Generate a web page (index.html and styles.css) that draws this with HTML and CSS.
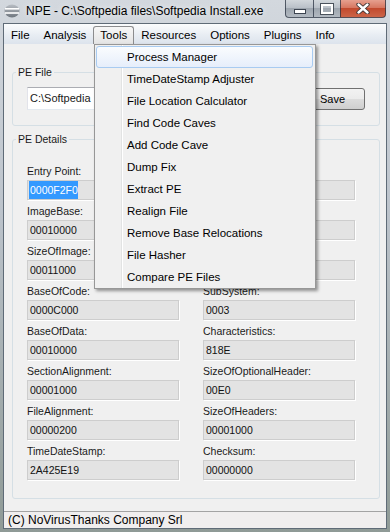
FILE: index.html
```html
<!DOCTYPE html>
<html lang="en">
<head>
  <meta charset="UTF-8" />
  <meta name="viewport" content="width=device-width, initial-scale=1.0"/>
  <title>NPE</title>
  <link rel="stylesheet" href="styles.css">
</head>
<body>

  <div class="window">

    <!-- Title bar -->
    <header class="titlebar">
      <svg class="app-icon" width="16" height="14" viewBox="0 0 16 14">
        <defs>
          <linearGradient id="disc" x1="0" y1="0" x2="0" y2="1">
            <stop offset="0" stop-color="#b9bec4"/>
            <stop offset="1" stop-color="#6f767e"/>
          </linearGradient>
        </defs>
        <ellipse cx="8" cy="7" rx="7.5" ry="6.5" fill="url(#disc)"/>
        <rect x="1" y="4" width="14" height="1.6" fill="#fff"/>
        <rect x="1" y="8.2" width="14" height="1.6" fill="#fff"/>
      </svg>
      <span class="title">NPE - C:\Softpedia files\Softpedia Install.exe</span>
      <div class="caption">
        <span class="cap-btn cap-min"><i class="glyph-min"></i></span>
        <span class="cap-btn cap-max"><i class="glyph-max"></i></span>
        <span class="cap-btn cap-close">
          <svg width="14" height="11" viewBox="0 0 14 11">
            <path d="M2.5 1.5 L11.5 9.5 M11.5 1.5 L2.5 9.5" stroke="#3a3030" stroke-width="4.2" stroke-linecap="round"/>
            <path d="M2.5 1.5 L11.5 9.5 M11.5 1.5 L2.5 9.5" stroke="#fff" stroke-width="2.4" stroke-linecap="round"/>
          </svg>
        </span>
      </div>
    </header>

    <div class="client">

      <!-- Menu bar -->
      <nav class="menubar">
        <span class="menu-item">File</span>
        <span class="menu-item">Analysis</span>
        <span class="menu-item open">Tools</span>
        <span class="menu-item">Resources</span>
        <span class="menu-item">Options</span>
        <span class="menu-item">Plugins</span>
        <span class="menu-item">Info</span>
      </nav>

      <main class="content">

        <section class="group">
          <div class="group-title">PE File</div>
          <div class="file-row">
            <div class="path">C:\Softpedia</div>
            <button class="btn">Save</button>
          </div>
        </section>

        <section class="group details">
          <div class="group-title">PE Details</div>
          <div class="fields">
            <div class="field"><div class="label">Entry Point:</div><div class="value"><span class="selected">0000F2F0</span></div></div>
            <div class="field"><div class="label"></div><div class="value"></div></div>

            <div class="field"><div class="label">ImageBase:</div><div class="value">00010000</div></div>
            <div class="field"><div class="label"></div><div class="value"></div></div>

            <div class="field"><div class="label">SizeOfImage:</div><div class="value">00011000</div></div>
            <div class="field"><div class="label"></div><div class="value"></div></div>

            <div class="field"><div class="label">BaseOfCode:</div><div class="value">0000C000</div></div>
            <div class="field"><div class="label">SubSystem:</div><div class="value">0003</div></div>

            <div class="field"><div class="label">BaseOfData:</div><div class="value">00010000</div></div>
            <div class="field"><div class="label">Characteristics:</div><div class="value">818E</div></div>

            <div class="field"><div class="label">SectionAlignment:</div><div class="value">00001000</div></div>
            <div class="field"><div class="label">SizeOfOptionalHeader:</div><div class="value">00E0</div></div>

            <div class="field"><div class="label">FileAlignment:</div><div class="value">00000200</div></div>
            <div class="field"><div class="label">SizeOfHeaders:</div><div class="value">00001000</div></div>

            <div class="field"><div class="label">TimeDateStamp:</div><div class="value">2A425E19</div></div>
            <div class="field"><div class="label">Checksum:</div><div class="value">00000000</div></div>
          </div>
        </section>

      </main>

      <footer class="statusbar">(C) NoVirusThanks Company Srl</footer>
    </div>

    <!-- Open Tools menu -->
    <ul class="dropdown">
      <li class="active">Process Manager</li>
      <li>TimeDateStamp Adjuster</li>
      <li>File Location Calculator</li>
      <li>Find Code Caves</li>
      <li>Add Code Cave</li>
      <li>Dump Fix</li>
      <li>Extract PE</li>
      <li>Realign File</li>
      <li>Remove Base Relocations</li>
      <li>File Hasher</li>
      <li>Compare PE Files</li>
    </ul>

  </div>

</body>
</html>
```

FILE: styles.css
```css
body {
  margin: 0;
  font-family: 'Liberation Sans', Arial, sans-serif;
  background: #b8c0c8;
}

.window {
  position: relative;
  width: 390px;
  height: 532px;
  box-sizing: border-box;
  padding: 0 3px 3px;
  display: flex;
  flex-direction: column;
  background: linear-gradient(#d3d8de, #bcc3cb 40%, #8f9a96);
}

/* title bar */
.titlebar {
  height: 23px;
  flex-shrink: 0;
  display: flex;
  align-items: flex-start;
}

.app-icon {
  margin: 4px 0 0 1px;
}

.title {
  margin: 4px 0 0 6px;
  font-size: 12px;
  line-height: 14px;
  color: #000;
  white-space: nowrap;
  text-shadow: 0 0 6px rgba(255,255,255,0.9);
}

.caption {
  margin-left: auto;
  margin-right: 1px;
  display: flex;
  height: 18px;
}

.cap-btn {
  display: flex;
  align-items: center;
  justify-content: center;
  height: 18px;
  box-sizing: border-box;
  border: 1px solid rgba(40,50,65,0.75);
  border-top: none;
  background: linear-gradient(#d2d7dc, #b7bec6 50%, #9ea6af 50%, #b2b9c1);
}

.cap-min {
  width: 28px;
  border-right: none;
  border-radius: 0 0 0 4px;
}

.cap-max {
  width: 27px;
  border-right: none;
}

.cap-close {
  width: 46px;
  border-radius: 0 0 4px 0;
  background: linear-gradient(#e6a08f, #d5735c 50%, #c24a2e 50%, #cc6447);
}

.glyph-min {
  display: block;
  width: 10px;
  height: 3px;
  margin-top: 6px;
  background: #fff;
  border: 1px solid #3c4450;
}

.glyph-max {
  display: block;
  width: 8px;
  height: 6px;
  border: 2px solid #fff;
  outline: 1px solid #4a525c;
}

/* client area */
.client {
  flex: 1;
  min-height: 0;
  display: flex;
  flex-direction: column;
  border: 1px solid #5f6b77;
  background: #f0f0f0;
}

.menubar {
  height: 20px;
  flex-shrink: 0;
  display: flex;
  font-size: 11.5px;
  color: #000;
  background: linear-gradient(#fbfcfd, #e8edf3 55%, #dce3ec);
}

.menu-item {
  margin-top: 2px;
  height: 18px;
  line-height: 17px;
  padding: 0 6px;
  box-sizing: border-box;
  border: 1px solid transparent;
  border-bottom: none;
  border-radius: 3px 3px 0 0;
}

.menu-item.open {
  border-color: #8b8c8e;
  background: linear-gradient(#f7f7f7, #e4e4e4);
}

.content {
  flex: 1;
  padding: 28px 6px 0 8px;
  font-size: 10.5px;
  color: #1a1a1a;
}

.group {
  border: 1px solid #d5dfe5;
  border-radius: 3px;
  padding: 0 14px 15px;
}

.group-title {
  width: fit-content;
  margin: -8px 0 0 -11px;
  padding: 0 2px;
  line-height: 14px;
  background: #f0f0f0;
}

.file-row {
  display: flex;
  gap: 9px;
  margin-top: 8px;
}

.path {
  flex: 1;
  height: 23px;
  box-sizing: border-box;
  padding: 0 2px;
  border: 1px solid;
  border-color: #abadb3 #dbdfe6 #e3e9ef #e2e3ea;
  background: #fff;
  font-size: 11px;
  line-height: 21px;
  white-space: nowrap;
  overflow: hidden;
}

.btn {
  width: 65px;
  height: 22px;
  margin-top: 1px;
  border: 1px solid #707070;
  border-radius: 3px;
  background: linear-gradient(#f2f2f2, #ebebeb 50%, #dddddd 50%, #cfcfcf);
  font: inherit;
  font-size: 11px;
  color: #000;
  padding: 0;
}

.details {
  margin-top: 13px;
  padding-bottom: 18px;
}

.fields {
  margin-top: 17px;
  display: grid;
  grid-template-columns: 152px 152px;
  column-gap: 24px;
  row-gap: 3px;
}

.label {
  height: 17px;
  line-height: 17px;
  white-space: nowrap;
}

.value {
  height: 20px;
  box-sizing: border-box;
  padding: 0 2px;
  line-height: 18px;
  border: 1px solid #cdcdcd;
  background: #e3e3e3;
  box-shadow: 1px 1px 0 #fff;
  color: #111;
}

.selected {
  display: inline-block;
  margin-left: -1px;
  padding-left: 1px;
  background: #3399ff;
  color: #fff;
}

.statusbar {
  height: 17px;
  flex-shrink: 0;
  box-sizing: border-box;
  border-top: 1px solid #a3a3a3;
  padding-left: 4px;
  font-size: 12px;
  line-height: 16px;
  background: #f0eeee;
  color: #000;
}

/* dropdown of the Tools menu */
.dropdown {
  position: absolute;
  left: 94px;
  top: 44px;
  width: 222px;
  box-sizing: border-box;
  margin: 0;
  padding: 1px 0 0;
  list-style: none;
  border: 1px solid #979797;
  font-size: 11.5px;
  color: #000;
  background: linear-gradient(to right, transparent 26px, #e2e3e3 26px, #e2e3e3 27px, #fff 27px, #fff 28px, transparent 28px), #f0f0f0;
  box-shadow: 2px 2px 3px rgba(0,0,0,0.4);
}

.dropdown li {
  height: 22px;
  box-sizing: border-box;
  margin: 0 2px 0 1px;
  padding-left: 30px;
  line-height: 20px;
  border: 1px solid transparent;
  border-radius: 3px;
}

.dropdown li.active {
  border-color: #a8cbf1;
  background: linear-gradient(#fafcfe, #e6eefb);
}
```
